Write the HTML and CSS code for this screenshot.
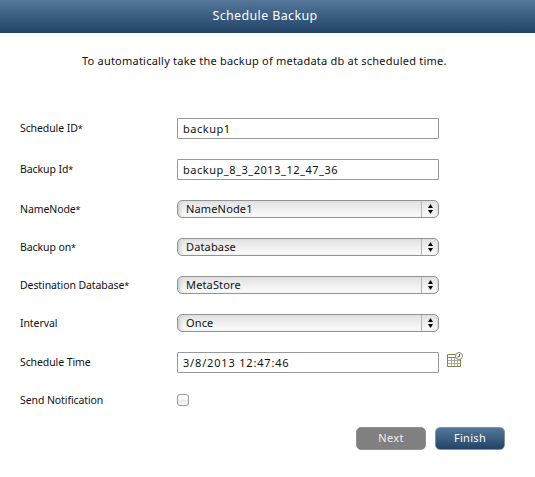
FILE: index.html
```html
<!DOCTYPE html>
<html lang="en">
<head>
<meta charset="utf-8">
<title>Schedule Backup</title>
<link rel="stylesheet" href="styles.css">
</head>
<body>
<header class="title-bar"><h1>Schedule Backup</h1></header>
<main>
<p class="intro">To automatically take the backup of metadata db at scheduled time.</p>
<form class="fields">
<label class="label" for="sid">Schedule ID<span class="star">*</span></label>
<input class="text" id="sid" type="text" value="backup1">
<label class="label" for="bid">Backup Id<span class="star">*</span></label>
<input class="text" id="bid" type="text" value="backup_8_3_2013_12_47_36">
<span class="label">NameNode<span class="star">*</span></span>
<div class="select"><span class="value">NameNode1</span><span class="arrows"><svg width="5" height="10" viewBox="0 0 5 10"><path d="M0 4 2.5 0 5 4zM0 6h5L2.500 10z"/></svg></span></div>
<span class="label">Backup on<span class="star">*</span></span>
<div class="select"><span class="value">Database</span><span class="arrows"><svg width="5" height="10" viewBox="0 0 5 10"><path d="M0 4 2.5 0 5 4zM0 6h5L2.500 10z"/></svg></span></div>
<span class="label">Destination Database<span class="star">*</span></span>
<div class="select"><span class="value">MetaStore</span><span class="arrows"><svg width="5" height="10" viewBox="0 0 5 10"><path d="M0 4 2.5 0 5 4zM0 6h5L2.500 10z"/></svg></span></div>
<span class="label">Interval</span>
<div class="select"><span class="value">Once</span><span class="arrows"><svg width="5" height="10" viewBox="0 0 5 10"><path d="M0 4 2.5 0 5 4zM0 6h5L2.500 10z"/></svg></span></div>
<label class="label raised" for="time">Schedule Time</label>
<div class="time-row">
<input class="text time" id="time" type="text" value="3/8/2013 12:47:46">
<svg class="calendar" width="17" height="16" viewBox="0 0 17 16">
<path d="M1 3h12v11H1z" fill="#fff"/>
<path d="M4.500 6v8M7.500 6v8M10.500 6v8M1 8.500h12M1 11.500h12" stroke="#aaa" fill="none"/>
<path d="M.5 2.500h13v12H.5zM.5 5.500h13" stroke="#85824e" fill="none"/>
<circle cx="12" cy="4" r="3.500" fill="#fff" stroke="#8d8b60"/>
<path d="M12.500 2v2.500l-2 .5" stroke="#555" fill="none"/>
</svg>
</div>
<label class="label" for="notify">Send Notification</label>
<input class="check" id="notify" type="checkbox">
</form>
<div class="actions">
<button class="button disabled" type="button">Next</button>
<button class="button" type="button">Finish</button>
</div>
</main>
</body>
</html>
```
FILE: styles.css
```css
* { box-sizing: border-box; }
body {
  margin: 0;
  background: #fff;
  color: #111;
  font: 11px/16px "Noto Sans", sans-serif;
}
.title-bar {
  height: 33px;
  background: linear-gradient(#54779b, #204366);
  text-align: center;
}
h1 {
  margin: 0;
  padding-right: 5px;
  color: #fff;
  font-size: 12.5px;
  font-weight: 400;
  line-height: 32px;
  letter-spacing: .35px;
}
.intro {
  margin: 0;
  padding: 20px 0 0 82px;
  font-size: 11px;
  letter-spacing: .22px;
  white-space: nowrap;
}
.fields {
  display: grid;
  grid-template-columns: 157px 1fr;
  grid-template-rows: 21px 21px 18px 18px 18px 18px 21px 13px;
  row-gap: 20px;
  align-items: center;
  margin: 49px 0 0;
  padding-left: 20px;
}
.label { font-size: 10.5px; line-height: 16px; letter-spacing: -.09px; }
.raised { padding-bottom: 2px; }
.star { font-size: 9px; }
.text {
  width: 262px;
  height: 21px;
  margin: 0;
  padding: 0 5px 1px;
  border: 1px solid #999;
  border-radius: 1px;
  outline: 0;
  background: #fff;
  color: #111;
  font: 11px/16px "Noto Sans", sans-serif;
  letter-spacing: .53px;
}
.time { letter-spacing: .82px; }
.select {
  display: flex;
  width: 262px;
  height: 18px;
  border: 1px solid #949494;
  border-radius: 5px;
  background: linear-gradient(#e2e2e2, #fcfcfc);
  box-shadow: inset 3px 0 3px -1px #ccc, inset -2px 0 2px -1px #ddd;
}
.value { flex: 1; padding-left: 8px; line-height: 16px; letter-spacing: .15px; }
.arrows {
  display: flex;
  align-items: center;
  justify-content: center;
  width: 17px;
  border-left: 1px solid #b5b5b5;
}
.time-row { display: flex; align-items: center; gap: 8px; }
.calendar { margin-top: -5px; }
.check {
  appearance: none;
  width: 12px;
  height: 12px;
  margin: 1px 0 0;
  border: 1px solid #999;
  border-radius: 3px;
  background: linear-gradient(#fff 40%, #e8e8e8 50%, #fafafa);
}
.actions { display: flex; gap: 9px; margin: 21px 0 0 356px; }
.button {
  width: 70px;
  height: 23px;
  padding: 0 0 1px;
  border: 1px solid #8a9099;
  border-radius: 5px;
  background: linear-gradient(#54779b, #204366);
  color: #fff;
  font: 11px/20px "Noto Sans", sans-serif;
  letter-spacing: .3px;
}
.disabled { border-color: #929292; background: #808080; color: #eee; }
```
